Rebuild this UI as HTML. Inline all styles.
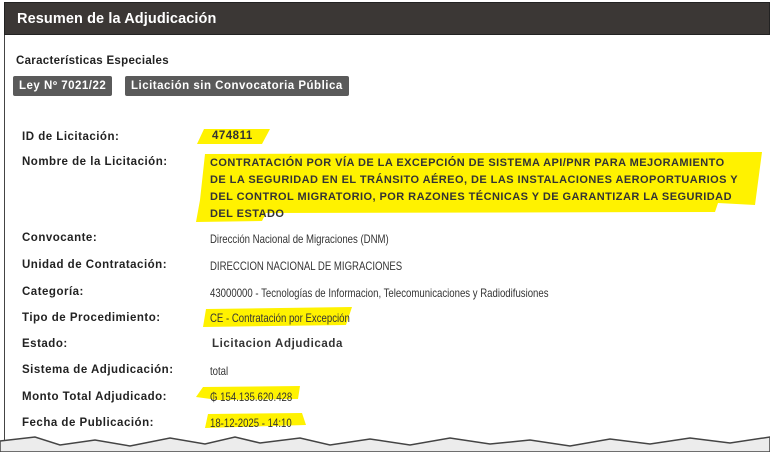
<!DOCTYPE html><html><head><meta charset="utf-8"><style>
body{margin:0;width:770px;height:452px;overflow:hidden;background:#fff;font-family:"Liberation Sans",Arial,sans-serif;position:relative}
.hdr{position:absolute;left:4px;top:2px;width:766px;height:33px;background:#3b3735;border:1px solid #222;box-sizing:border-box}
.hdr span{position:absolute;left:12px;top:8px;color:#fff;font-weight:bold;font-size:14.5px;letter-spacing:.1px}
.frame{position:absolute;left:4px;top:35px;width:1px;height:410px;background:#444}
.t{position:absolute;white-space:nowrap;color:#222}
.lb{font-weight:bold;font-size:11.5px;letter-spacing:.5px;left:22px}
.v{left:210px;font-size:12px;color:#333;transform:scaleX(.8);transform-origin:left}
.tag{position:absolute;top:76px;height:20px;background:#5a5a5a;color:#fff;font-weight:bold;font-size:11.5px;line-height:20px;padding:0 6px;border-radius:2px;letter-spacing:.5px}
</style></head><body>
<div class="hdr"><span>Resumen de la Adjudicación</span></div>
<div class="frame"></div>
<div class="t" style="left:16px;top:55px;font-weight:bold;font-size:11.5px;letter-spacing:.3px">Características Especiales</div>
<div class="tag" style="left:13px">Ley Nº 7021/22</div>
<div class="tag" style="left:125px">Licitación sin Convocatoria Pública</div>

<svg style="position:absolute;left:0;top:0" width="770" height="452">
<polygon points="204,129 270,129 262,144 197,144" fill="#fff200"/>
<polygon points="205,154 762,152 755,205 718,203 715,212 266,213 262,221 196,222 200,200" fill="#fff200"/>
<polygon points="206,309 352,307 346,325 203,327" fill="#fff200"/>
<polygon points="203,387 300,386 298,399 218,400 196,397" fill="#fff200"/>
<polygon points="208,414 302,413 306,425 205,428" fill="#fff200"/>
<path d="M0,452 L0,441 L35,437 L60,445 L95,440 L130,446 L170,438 L205,444 L235,437 L260,443 L300,438 L330,445 L370,439 L410,445 L450,438 L490,444 L530,440 L570,446 L610,439 L650,444 L690,438 L730,443 L770,437 L770,452 Z" fill="#ececec" stroke="#444" stroke-width="1.5"/>
</svg>

<div class="t lb" style="top:131px">ID de Licitación:</div>
<div class="t" style="left:212px;top:130px;font-weight:bold;font-size:11.5px;color:#333;letter-spacing:.5px">474811</div>
<div class="t lb" style="top:156px">Nombre de la Licitación:</div>
<div class="t" style="left:210px;top:155px;font-weight:bold;font-size:11px;color:#333;line-height:17px;letter-spacing:.45px">CONTRATACIÓN POR VÍA DE LA EXCEPCIÓN DE SISTEMA API/PNR PARA MEJORAMIENTO<br>DE LA SEGURIDAD EN EL TRÁNSITO AÉREO, DE LAS INSTALACIONES AEROPORTUARIOS Y<br>DEL CONTROL MIGRATORIO, POR RAZONES TÉCNICAS Y DE GARANTIZAR LA SEGURIDAD<br>DEL ESTADO</div>
<div class="t lb" style="top:232px">Convocante:</div><div class="t v" style="top:232px">Dirección Nacional de Migraciones (DNM)</div>
<div class="t lb" style="top:259px">Unidad de Contratación:</div><div class="t v" style="top:259px">DIRECCION NACIONAL DE MIGRACIONES</div>
<div class="t lb" style="top:286px">Categoría:</div><div class="t v" style="top:286px">43000000 - Tecnologías de Informacion, Telecomunicaciones y Radiodifusiones</div>
<div class="t lb" style="top:312px">Tipo de Procedimiento:</div><div class="t v" style="top:311px">CE - Contratación por Excepción</div>
<div class="t lb" style="top:338px">Estado:</div><div class="t" style="left:212px;top:338px;font-weight:bold;font-size:11.5px;color:#333;letter-spacing:.6px">Licitacion Adjudicada</div>
<div class="t lb" style="top:364px">Sistema de Adjudicación:</div><div class="t v" style="top:364px">total</div>
<div class="t lb" style="top:391px">Monto Total Adjudicado:</div><div class="t v" style="top:390px">₲ 154.135.620.428</div>
<div class="t lb" style="top:417px">Fecha de Publicación:</div><div class="t v" style="top:416px">18-12-2025 - 14:10</div>
</body></html>
